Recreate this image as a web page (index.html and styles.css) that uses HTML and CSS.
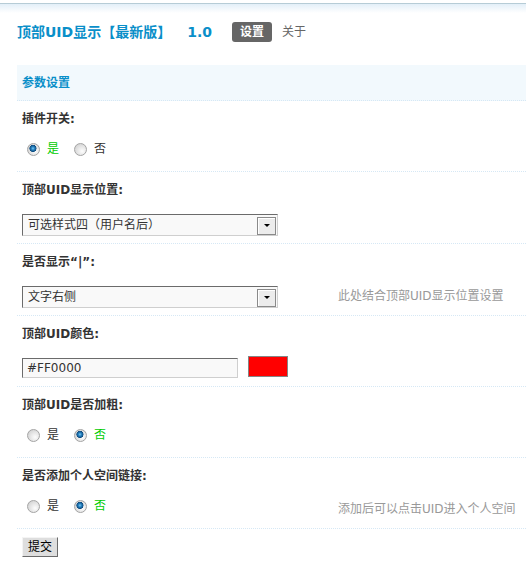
FILE: index.html
```html
<!DOCTYPE html>
<html lang="zh-CN">
<head>
<meta charset="utf-8">
<title>顶部UID显示</title>
<link rel="stylesheet" href="styles.css">
</head>
<body>
<div class="topbar"></div>
<div class="page">
  <div class="itemtitle">
    <h3>顶部UID显示【最新版】<span class="ver">1.0</span></h3>
    <ul class="tabs">
      <li class="current"><a>设置</a></li>
      <li><a>关于</a></li>
    </ul>
  </div>
  <form class="tb">
    <div class="partition">参数设置</div>

    <div class="sect">
      <div class="lbl">插件开关:</div>
      <div class="val">
        <div class="field field-radio">
          <div class="radios">
            <label class="radio checked"><input type="radio" name="open" checked><span>是</span></label>
            <label class="radio"><input type="radio" name="open"><span>否</span></label>
          </div>
        </div>
        <div class="tip"></div>
      </div>
    </div>

    <div class="sect">
      <div class="lbl">顶部UID显示位置:</div>
      <div class="val">
        <div class="field">
          <span class="sel"><select><option>可选样式四（用户名后）</option></select></span>
        </div>
        <div class="tip"></div>
      </div>
    </div>

    <div class="sect">
      <div class="lbl">是否显示“|”:</div>
      <div class="val">
        <div class="field">
          <span class="sel"><select><option>文字右侧</option></select></span>
        </div>
        <div class="tip">此处结合顶部UID显示位置设置</div>
      </div>
    </div>

    <div class="sect">
      <div class="lbl">顶部UID颜色:</div>
      <div class="val">
        <div class="field field-color">
          <input class="txt" type="text" value="#FF0000">
          <span class="swatch"></span>
        </div>
        <div class="tip"></div>
      </div>
    </div>

    <div class="sect">
      <div class="lbl">顶部UID是否加粗:</div>
      <div class="val">
        <div class="field field-radio">
          <div class="radios">
            <label class="radio"><input type="radio" name="bold"><span>是</span></label>
            <label class="radio checked"><input type="radio" name="bold" checked><span>否</span></label>
          </div>
        </div>
        <div class="tip"></div>
      </div>
    </div>

    <div class="sect">
      <div class="lbl">是否添加个人空间链接:</div>
      <div class="val">
        <div class="field field-radio">
          <div class="radios">
            <label class="radio"><input type="radio" name="link"><span>是</span></label>
            <label class="radio checked"><input type="radio" name="link" checked><span>否</span></label>
          </div>
        </div>
        <div class="tip">添加后可以点击UID进入个人空间</div>
      </div>
    </div>

    <div class="submit">
      <button type="button" class="btn">提交</button>
    </div>
  </form>
</div>
</body>
</html>
```

FILE: styles.css
```css
* { box-sizing: border-box; }
html, body { margin: 0; padding: 0; background: #fff; }
body {
  font: 12px/18px "DejaVu Sans", "Noto Sans CJK SC", sans-serif;
  color: #333;
}
.topbar {
  height: 13px;
  background: linear-gradient(to bottom, #fff 0, #fff 3px, #b6ccd6 3px, #b6ccd6 4px, #e3eff8 4px, #fff 13px);
}
.page { padding-left: 17px; }

.itemtitle {
  display: flex;
  align-items: center;
  height: 20px;
  margin: 9px 0 23px;
}
.itemtitle h3 {
  margin: 0;
  font-size: 14px;
  line-height: 20px;
  font-weight: 700;
  color: #0a8fc9;
}
.itemtitle .ver { margin-left: 16px; }
.tabs {
  list-style: none;
  margin: 0 0 0 20px;
  padding: 0;
  display: flex;
  gap: 2px;
}
.tabs a {
  display: block;
  padding: 0 8px;
  line-height: 20px;
  color: #666;
  border-radius: 3px;
}
.tabs .current a {
  background: #666;
  color: #fff;
  font-weight: 700;
}

.partition {
  background: #f2f9fd;
  color: #0a8fc9;
  font-weight: 700;
  padding: 9px 5px 8px;
  line-height: 18px;
  border-bottom: 1px dotted #d6e8f5;
}
.sect { border-bottom: 1px dotted #d6e8f5; }
.lbl {
  padding: 9px 5px 5px;
  font-weight: 700;
  color: #333;
}
.val { display: flex; align-items: center; }
.field {
  flex: none;
  width: 316px;
  padding: 10px 5px 7px;
}
.field-radio { padding: 7px 5px 13px; }
.field-color {
  display: flex;
  align-items: flex-start;
  padding: 10px 5px 8px;
}
.tip {
  padding-left: 5px;
  color: #999;
}

.radios {
  display: flex;
  align-items: center;
  height: 18px;
  padding-left: 5px;
}
.radio {
  display: flex;
  align-items: center;
  gap: 7px;
  margin-right: 15px;
}
.radio.checked span { color: #0c0; }
.radio input {
  appearance: none;
  -webkit-appearance: none;
  margin: 0;
  width: 13px;
  height: 13px;
  border-radius: 50%;
  border: 1px solid #a4a4a4;
  background: radial-gradient(circle at 65% 65%, #fdfdfd 0, #e6e6e6 45%, #c9c9c9 100%);
}
.radio input:checked {
  background:
    radial-gradient(circle at 45% 40%, #7ccbf5 0, #2a86c4 1.5px, #0d4a7e 3.3px, transparent 3.8px),
    radial-gradient(circle at 65% 65%, #fdfdfd 0, #e6e6e6 45%, #c9c9c9 100%);
}

.sel {
  position: relative;
  display: inline-block;
  vertical-align: top;
}
.sel select {
  appearance: none;
  -webkit-appearance: none;
  display: block;
  width: 256px;
  height: 22px;
  margin: 0;
  padding: 0 22px 0 5px;
  font: 12px/20px "DejaVu Sans", "Noto Sans CJK SC", sans-serif;
  color: #333;
  background: #f9f9f9;
  border: 1px solid;
  border-color: #6b6b6b #cfcfcf #cfcfcf #6b6b6b;
  border-radius: 0;
}
.sel::after {
  content: "";
  position: absolute;
  right: 2px;
  top: 3px;
  width: 17px;
  height: 16px;
  border: 1px solid #8a8a8a;
  background: #ececec;
  box-shadow: inset 1px 1px 0 #fff;
  pointer-events: none;
}
.sel::before {
  content: "";
  position: absolute;
  z-index: 1;
  right: 8px;
  top: 10px;
  width: 0;
  height: 0;
  border-left: 3px solid transparent;
  border-right: 3px solid transparent;
  border-top: 3px solid #000;
  pointer-events: none;
}

.txt {
  width: 216px;
  height: 20px;
  margin: 0;
  padding: 0 4px;
  font: 12px/18px "DejaVu Sans", "Noto Sans CJK SC", sans-serif;
  color: #333;
  background: #f9f9f9;
  border: 1px solid;
  border-color: #6b6b6b #cfcfcf #cfcfcf #6b6b6b;
  border-radius: 0;
  outline: none;
}
.swatch {
  width: 40px;
  height: 21px;
  margin: -2px 0 0 10px;
  background: #f00;
  border: 1px solid #858585;
}

.submit { padding: 8px 5px; }
.btn {
  height: 20px;
  margin: 0;
  padding: 0 5px;
  font: 12px/18px "DejaVu Sans", "Noto Sans CJK SC", sans-serif;
  color: #000;
  background: #dedede;
  border: 1px solid;
  border-color: #f4f4f4 #6b6b6b #6b6b6b #f4f4f4;
  border-radius: 0;
}
```
